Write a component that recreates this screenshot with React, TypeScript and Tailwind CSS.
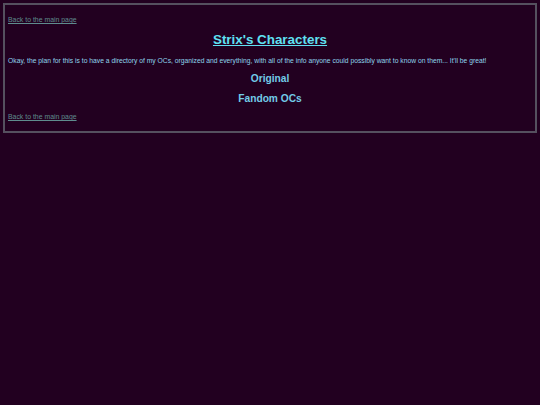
export default function App() {
  return (
    <div className="min-h-[405px] bg-[#220020] p-[3px] font-['Liberation_Sans',Arial,sans-serif]">
      <div className="border-2 border-[#55505f] px-[3px] pt-[10px] pb-[10px]">
        <a href="#" className="block text-[6.9px] leading-[9px] text-[#5f8c8e] underline">Back to the main page</a>
        <h1 className="mt-[8px] text-center text-[13.4px] leading-[16px] font-bold text-[#5fe0f2] underline">Strix's Characters</h1>
        <p className="mt-[8px] text-[6.75px] leading-[9px] text-[#8fd4ec]">Okay, the plan for this is to have a directory of my OCs, organized and everything, with all of the info anyone could possibly want to know on them... It'll be great!</p>
        <h2 className="mt-[8px] text-center text-[10.2px] leading-[12px] font-bold text-[#72cbe8]">Original</h2>
        <h2 className="mt-[8px] text-center text-[10.2px] leading-[12px] font-bold text-[#72cbe8]">Fandom OCs</h2>
        <a href="#" className="mt-[7px] block text-[6.9px] leading-[9px] text-[#5f8c8e] underline">Back to the main page</a>
      </div>
    </div>
  );
}
